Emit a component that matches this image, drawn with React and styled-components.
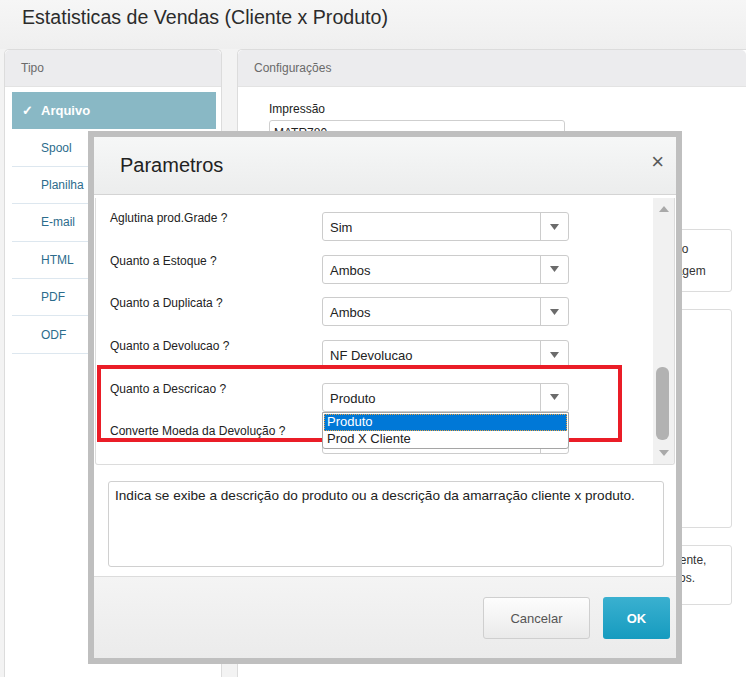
import React from "react";
import styled, { createGlobalStyle } from "styled-components";

const GlobalStyle = createGlobalStyle`
  html, body {
    margin: 0;
    padding: 0;
  }
  body {
    font-family: "Liberation Sans", Arial, sans-serif;
    background: #f3f3f3;
  }
`;

const tipos = ["Spool", "Planilha", "E-mail", "HTML", "PDF", "ODF"];

const params = [
  { label: "Aglutina prod.Grade ?", value: "Sim" },
  { label: "Quanto a Estoque ?", value: "Ambos" },
  { label: "Quanto a Duplicata ?", value: "Ambos" },
  { label: "Quanto a Devolucao ?", value: "NF Devolucao" },
  { label: "Quanto a Descricao ?", value: "Produto", open: true },
  { label: "Converte Moeda da Devolução ?", value: "" },
];

const App = () => {
  return (
    <Page>
      <GlobalStyle />
      <TitleBar>Estatisticas de Vendas (Cliente x Produto)</TitleBar>

      <Main>
        <LeftPanel>
          <PanelHeader>Tipo</PanelHeader>
          <TipoList>
            <TipoItem $active>
              <Check>✓</Check>Arquivo
            </TipoItem>
            {tipos.map((t) => (
              <TipoItem key={t}>{t}</TipoItem>
            ))}
          </TipoList>
        </LeftPanel>

        <RightPanel>
          <PanelHeader>Configurações</PanelHeader>
          <ConfigBody>
            <ConfigColumn>
              <FieldLabel>Impressão</FieldLabel>
              <TextInput>MATR780</TextInput>
            </ConfigColumn>
            <SideColumn>
              <SideBox $height={63} $indent={4}>
                <SideLine>Imprimir em retrato</SideLine>
                <SideLine>Imprimir em paisagem</SideLine>
              </SideBox>
              <SideBox $height={219} />
              <SideBox $height={60} $lineHeight={18}>
                <SideLine>Ordenar pelo cliente,</SideLine>
                <SideLine>produtos e grupos.</SideLine>
              </SideBox>
            </SideColumn>
          </ConfigBody>
        </RightPanel>
      </Main>

      <Modal>
        <ModalHeader>
          <ModalTitle>Parametros</ModalTitle>
          <CloseButton>×</CloseButton>
        </ModalHeader>

        <ModalBody>
          <ScrollArea>
            <ParamList>
              {params.map((p) => (
                <ParamRow key={p.label}>
                  <ParamLabel>{p.label}</ParamLabel>
                  <SelectWrap>
                    <Select>
                      <SelectValue>{p.value}</SelectValue>
                      <SelectArrow>
                        <svg width="9" height="6" viewBox="0 0 9 6">
                          <path d="M0 0 L9 0 L4.5 6 Z" fill="#6b6b6b" />
                        </svg>
                      </SelectArrow>
                    </Select>
                    {p.open && (
                      <DropList>
                        <DropItem $selected>Produto</DropItem>
                        <DropItem>Prod X Cliente</DropItem>
                      </DropList>
                    )}
                  </SelectWrap>
                </ParamRow>
              ))}
            </ParamList>
            <Scrollbar>
              <ScrollArrow>
                <svg width="10" height="6" viewBox="0 0 10 6">
                  <path d="M0 6 L10 6 L5 0 Z" fill="#a9a9a9" />
                </svg>
              </ScrollArrow>
              <ScrollTrack>
                <ScrollThumb $offset={147} $size={73} />
              </ScrollTrack>
              <ScrollArrow>
                <svg width="10" height="6" viewBox="0 0 10 6">
                  <path d="M0 0 L10 0 L5 6 Z" fill="#a9a9a9" />
                </svg>
              </ScrollArrow>
            </Scrollbar>
          </ScrollArea>

          <Description>
            Indica se exibe a descrição do produto ou a descrição da amarração
            cliente x produto.
          </Description>
        </ModalBody>

        <ModalFooter>
          <Button>Cancelar</Button>
          <Button $primary>OK</Button>
        </ModalFooter>
      </Modal>

      <Highlight />
    </Page>
  );
};

const Page = styled.div`
  position: relative;
  width: 746px;
  height: 677px;
  overflow: hidden;
  background: #f3f3f3;
  display: flex;
  flex-direction: column;
`;

const TitleBar = styled.h1`
  margin: 0;
  height: 49px;
  box-sizing: border-box;
  padding: 5px 0 0 22px;
  font-size: 19.6px;
  line-height: 24px;
  font-weight: normal;
  color: #2b2b2b;
  background: linear-gradient(#f6f6f6, #efefef);
`;

const Main = styled.div`
  flex: 1;
  display: flex;
  gap: 15px;
  padding-left: 4px;
  min-height: 0;
`;

const LeftPanel = styled.div`
  width: 218px;
  flex-shrink: 0;
  box-sizing: border-box;
  background: #fff;
  border: 1px solid #dcdcdc;
  border-bottom: none;
  border-radius: 5px 5px 0 0;
`;

const RightPanel = styled.div`
  flex: 1;
  min-width: 0;
  overflow: hidden;
  background: #fff;
  border: 1px solid #dcdcdc;
  border-right: none;
  border-bottom: none;
  border-radius: 5px 0 0 0;
  display: flex;
  flex-direction: column;
`;

const PanelHeader = styled.div`
  height: 37px;
  box-sizing: border-box;
  display: flex;
  align-items: center;
  padding-left: 16px;
  font-size: 12px;
  color: #6a6a6a;
  background: #ececee;
  border-bottom: 1px solid #e3e3e3;
  border-radius: 5px 5px 0 0;
`;

const TipoList = styled.div`
  padding: 5px 5px 0 7px;
`;

const TipoItem = styled.div`
  height: 37.4px;
  box-sizing: border-box;
  display: flex;
  align-items: center;
  padding-left: ${(p) => (p.$active ? 10 : 29)}px;
  font-size: ${(p) => (p.$active ? 13 : 12)}px;
  font-weight: ${(p) => (p.$active ? "bold" : "normal")};
  color: ${(p) => (p.$active ? "#fff" : "#2c6c8c")};
  background: ${(p) => (p.$active ? "#89b8c5" : "transparent")};
  border-bottom: ${(p) => (p.$active ? "none" : "1px solid #dde7ef")};
`;

const Check = styled.span`
  width: 19px;
  font-size: 13px;
`;

const ConfigBody = styled.div`
  flex: 1;
  display: flex;
  justify-content: space-between;
  padding: 14px 14px 0 31px;
`;

const ConfigColumn = styled.div`
  display: flex;
  flex-direction: column;
`;

const FieldLabel = styled.div`
  font-size: 12px;
  line-height: 16px;
  color: #222;
  margin-bottom: 3px;
`;

const TextInput = styled.div`
  width: 296px;
  height: 28px;
  box-sizing: border-box;
  border: 1px solid #cfcfcf;
  border-radius: 3px;
  padding: 5px 4px;
  font-size: 12px;
  color: #222;
`;

const SideColumn = styled.div`
  width: 150px;
  flex-shrink: 0;
  padding-top: 128px;
  display: flex;
  flex-direction: column;
  gap: 17px;
`;

const SideBox = styled.div`
  height: ${(p) => p.$height}px;
  box-sizing: border-box;
  border: 1px solid #dcdcdc;
  border-radius: 3px;
  padding: ${(p) => (p.$lineHeight ? 5 : 8)}px 8px 0
    ${(p) => (p.$indent != null ? p.$indent : 12)}px;
  font-size: 12px;
  line-height: ${(p) => p.$lineHeight || 22}px;
  color: #333;
`;

const SideLine = styled.div`
  white-space: nowrap;
`;

const Modal = styled.div`
  position: absolute;
  left: 88px;
  top: 131px;
  width: 594px;
  height: 533px;
  box-sizing: border-box;
  border: 6px solid #bfbfbf;
  background: #fff;
  display: flex;
  flex-direction: column;
`;

const ModalHeader = styled.div`
  height: 58px;
  box-sizing: border-box;
  display: flex;
  align-items: center;
  justify-content: space-between;
  padding: 0 12px 0 26px;
  background: linear-gradient(#f6f7f7, #eceded);
  border-bottom: 1px solid #d4d4d4;
`;

const ModalTitle = styled.div`
  font-size: 20px;
  color: #222;
`;

const CloseButton = styled.div`
  font-size: 22px;
  color: #5a5a5a;
  line-height: 22px;
  margin-top: -8px;
`;

const ModalBody = styled.div`
  display: flex;
  flex-direction: column;
  padding: 3px 1px 0;
`;

const ScrollArea = styled.div`
  height: 267px;
  box-sizing: border-box;
  display: flex;
  border: 1px solid #dcdcdc;
  border-top: none;
  border-radius: 0 0 3px 3px;
  overflow: hidden;
`;

const ParamList = styled.div`
  flex: 1;
  padding: 14px 0 0 14px;
  overflow: hidden;
`;

const ParamRow = styled.div`
  display: grid;
  grid-template-columns: 212px 247px;
  height: 42.7px;
`;

const ParamLabel = styled.div`
  font-size: 12px;
  line-height: 12px;
  color: #222;
`;

const SelectWrap = styled.div`
  position: relative;
`;

const Select = styled.div`
  height: 29px;
  box-sizing: border-box;
  display: flex;
  border: 1px solid #cccccc;
  border-radius: 3px;
  background: #fff;
`;

const SelectValue = styled.div`
  flex: 1;
  display: flex;
  align-items: center;
  padding: 2px 0 0 7px;
  font-size: 13px;
  color: #222;
`;

const SelectArrow = styled.div`
  width: 27px;
  display: flex;
  align-items: center;
  justify-content: center;
  border-left: 1px solid #cccccc;
`;

const DropList = styled.div`
  position: absolute;
  top: 29px;
  left: 0;
  right: 0;
  height: 37px;
  box-sizing: border-box;
  border: 1px solid #a5a5a5;
  border-radius: 0 0 3px 3px;
  background: #fff;
  padding: 1px;
  z-index: 2;
`;

const DropItem = styled.div`
  height: 17px;
  box-sizing: border-box;
  padding-left: 3px;
  font-size: 13px;
  line-height: 16px;
  color: ${(p) => (p.$selected ? "#fff" : "#222")};
  background: ${(p) => (p.$selected ? "#0078d7" : "transparent")};
  outline: ${(p) => (p.$selected ? "1px dotted #e8a040" : "none")};
  outline-offset: -1px;
`;

const Scrollbar = styled.div`
  width: 21px;
  background: #f1f1f1;
  display: flex;
  flex-direction: column;
`;

const ScrollArrow = styled.div`
  height: 22px;
  display: flex;
  align-items: center;
  justify-content: center;
`;

const ScrollTrack = styled.div`
  flex: 1;
  padding-left: 3px;
`;

const ScrollThumb = styled.div`
  width: 13px;
  height: ${(p) => p.$size}px;
  margin-top: ${(p) => p.$offset}px;
  background: #b2b2b2;
  border-radius: 6px;
`;

const Description = styled.div`
  height: 86px;
  box-sizing: border-box;
  margin: 16px 11px 9px 13px;
  padding: 6px 6px;
  border: 1px solid #d0d0d0;
  border-radius: 3px;
  font-size: 13.6px;
  line-height: 15px;
  color: #222;
`;

const ModalFooter = styled.div`
  flex: 1;
  display: flex;
  justify-content: flex-end;
  align-items: flex-start;
  gap: 13px;
  padding: 20px 6px 0 0;
  background: linear-gradient(#f4f4f4, #ebebeb);
  border-top: 1px solid #dcdcdc;
`;

const Button = styled.button`
  width: ${(p) => (p.$primary ? 67 : 107)}px;
  height: 42px;
  border-radius: 3px;
  font-family: "Liberation Sans", Arial, sans-serif;
  font-size: 13px;
  font-weight: ${(p) => (p.$primary ? "bold" : "normal")};
  color: ${(p) => (p.$primary ? "#fff" : "#555")};
  border: ${(p) => (p.$primary ? "none" : "1px solid #cfcfcf")};
  background: ${(p) =>
    p.$primary
      ? "linear-gradient(#3ab0d0, #169bbf)"
      : "linear-gradient(#fdfdfd, #eaeaea)"};
  cursor: pointer;
`;

const Highlight = styled.div`
  position: absolute;
  left: 97px;
  top: 365px;
  width: 525px;
  height: 77px;
  box-sizing: border-box;
  border: 4px solid #ea1d27;
  pointer-events: none;
`;

export default App;
